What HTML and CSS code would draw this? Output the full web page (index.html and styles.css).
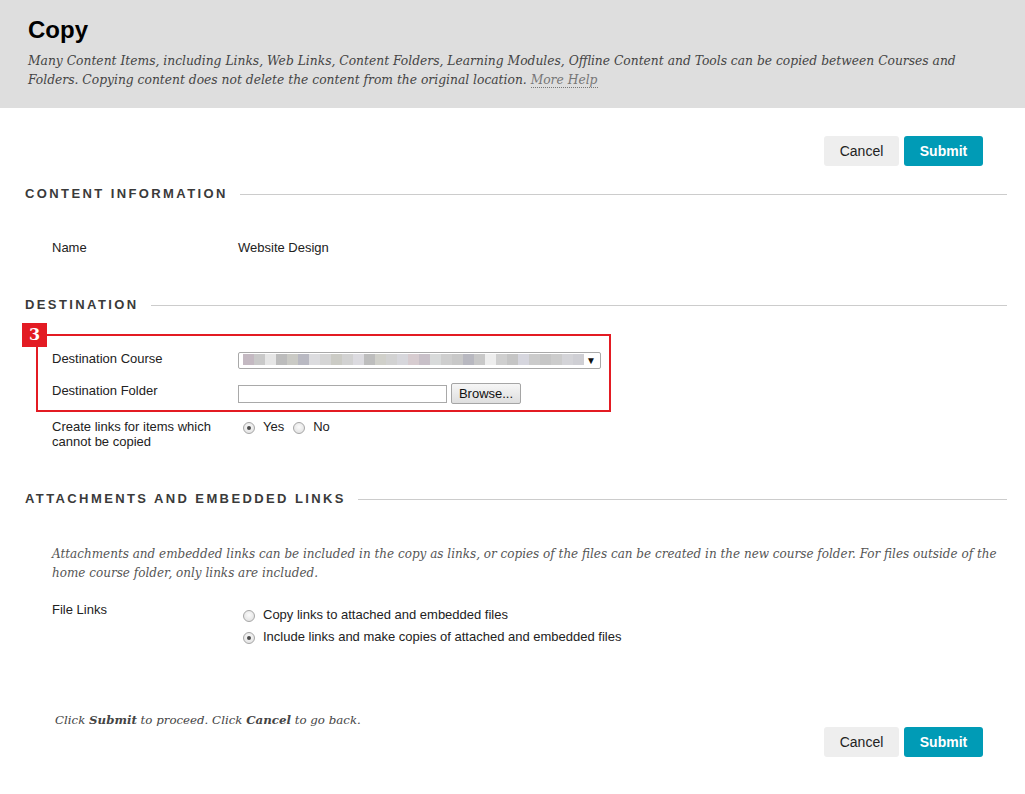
FILE: index.html
```html
<!DOCTYPE html>
<html lang="en">
<head>
<meta charset="utf-8">
<title>Copy</title>
<link rel="stylesheet" href="styles.css">
</head>
<body>
<header class="page-header">
  <h1 class="page-title">Copy</h1>
  <p class="page-desc">Many Content Items, including Links, Web Links, Content Folders, Learning Modules, Offline Content and Tools can be copied between Courses and Folders. Copying content does not delete the content from the original location. <span class="help-link">More Help</span></p>
</header>

<div class="btn-bar top-bar">
  <button class="btn btn-cancel">Cancel</button>
  <button class="btn btn-submit">Submit</button>
</div>

<section class="section sec-content">
  <h2 class="sec-title"><span>Content Information</span></h2>
  <div class="row row-name">
    <div class="label">Name</div>
    <div class="value">Website Design</div>
  </div>
</section>

<section class="section sec-dest">
  <h2 class="sec-title"><span>Destination</span></h2>
  <div class="callout">
    <span class="badge">3</span>
    <div class="row row-course">
      <div class="label">Destination Course</div>
      <div class="select">
        <div class="mosaic">
          <i style="background:#c4b9c2"></i><i style="background:#c9c9c9"></i><i style="background:#e6e6e6"></i><i style="background:#bcbcbc"></i><i style="background:#cacac5"></i><i style="background:#b9b9c2"></i><i style="background:#dcdcdf"></i><i style="background:#d5d5d5"></i><i style="background:#cbcbc5"></i><i style="background:#d2d2d2"></i><i style="background:#dcdbe0"></i><i style="background:#bdbdbd"></i><i style="background:#d0d0ca"></i><i style="background:#d2d2d2"></i><i style="background:#d7d7dc"></i><i style="background:#d7ccd0"></i><i style="background:#c8c0c8"></i><i style="background:#d8dada"></i><i style="background:#cecece"></i><i style="background:#c8c8c8"></i><i style="background:#b8b8c0"></i><i style="background:#c8c8c8"></i><i style="background:#eeeeee"></i><i style="background:#cfcfcf"></i><i style="background:#c5c5c5"></i><i style="background:#d6d6de"></i><i style="background:#cbcbcb"></i><i style="background:#c6c6c6"></i><i style="background:#cccccc"></i><i style="background:#d4d4d8"></i><i style="background:#cfcfd4"></i>
        </div>
        <span class="arrow">&#9660;</span>
      </div>
    </div>
    <div class="row row-folder">
      <div class="label">Destination Folder</div>
      <div class="value folder-ctrl">
        <span class="text-input"></span>
        <button class="browse">Browse...</button>
      </div>
    </div>
  </div>
  <div class="row row-links">
    <div class="label">Create links for items which cannot be copied</div>
    <div class="value radios-inline">
      <span class="radio checked"></span><span class="radio-label">Yes</span>
      <span class="radio"></span><span class="radio-label">No</span>
    </div>
  </div>
</section>

<section class="section sec-attach">
  <h2 class="sec-title"><span>Attachments and Embedded Links</span></h2>
  <p class="instructions">Attachments and embedded links can be included in the copy as links, or copies of the files can be created in the new course folder. For files outside of the home course folder, only links are included.</p>
  <div class="row row-files">
    <div class="label">File Links</div>
    <div class="value radios-stack">
      <div class="opt"><span class="radio"></span><span class="radio-label">Copy links to attached and embedded files</span></div>
      <div class="opt"><span class="radio checked"></span><span class="radio-label">Include links and make copies of attached and embedded files</span></div>
    </div>
  </div>
</section>

<footer class="footer">
  <p class="footer-note">Click <b>Submit</b> to proceed. Click <b>Cancel</b> to go back.</p>
  <div class="btn-bar bottom-bar">
    <button class="btn btn-cancel">Cancel</button>
    <button class="btn btn-submit">Submit</button>
  </div>
</footer>
</body>
</html>
```

FILE: styles.css
```css
* { box-sizing: border-box; }

body {
  margin: 0;
  font-family: "Liberation Sans", Arial, sans-serif;
  font-size: 13px;
  color: #222;
  background: #fff;
}

.page-header {
  background: #dedede;
  height: 108px;
  padding: 16px 28px 0 28px;
}

.page-title {
  margin: 0;
  font-size: 24px;
  line-height: 28px;
  font-weight: bold;
  color: #000;
}

.page-desc {
  margin: 8px 0 0 0;
  font-family: "DejaVu Serif", Georgia, serif;
  font-style: italic;
  font-size: 12.3px;
  line-height: 19px;
  color: #444;
  max-width: 960px;
}

.help-link {
  color: #777;
  border-bottom: 1px dotted #777;
}

.btn-bar {
  display: flex;
  justify-content: flex-end;
  gap: 5px;
  padding-right: 42px;
}

.top-bar { padding-top: 28px; }

.btn {
  height: 30px;
  border: none;
  border-radius: 3px;
  font-family: "Liberation Sans", Arial, sans-serif;
  font-size: 14px;
  padding: 0;
}

.btn-cancel {
  width: 75px;
  background: #eeeeee;
  color: #222;
}

.btn-submit {
  width: 79px;
  background: #009bb6;
  color: #fff;
  font-weight: bold;
}

.section { padding: 0 18px 0 25px; }

.sec-title {
  display: flex;
  align-items: center;
  gap: 12px;
  margin: 0;
  font-size: 13px;
  line-height: 16px;
  font-weight: bold;
  text-transform: uppercase;
  letter-spacing: 2.4px;
  color: #3a3a3a;
}

.sec-title::after {
  content: "";
  flex: 1;
  height: 1px;
  background: #cccccc;
}

.sec-content { margin-top: 20px; }
.sec-dest { margin-top: 41px; }
.sec-attach { margin-top: 42px; }

.row {
  display: grid;
  grid-template-columns: 186px 1fr;
  align-items: start;
  line-height: 16px;
}

.row-name {
  margin-top: 38px;
  padding-left: 27px;
}

.callout {
  position: relative;
  margin: 21px 0 0 11px;
  width: 575px;
  border: 2px solid #e31b23;
  padding: 15px 0 6px 14px;
}

.badge {
  position: absolute;
  left: -16px;
  top: -13px;
  width: 25px;
  height: 24px;
  background: #e31b23;
  color: #fff;
  font-family: "DejaVu Serif", Georgia, serif;
  font-weight: bold;
  font-size: 16px;
  line-height: 24px;
  text-align: center;
}

.select {
  position: relative;
  margin-top: 1px;
  width: 363px;
  height: 17px;
  border: 1px solid #a9a9a9;
  border-radius: 2px;
  background: #fff;
  padding: 1px 0 0 4px;
}

.mosaic {
  display: flex;
  height: 11px;
}

.mosaic i {
  display: block;
  width: 11px;
  height: 11px;
}

.arrow {
  position: absolute;
  right: 4px;
  top: 1px;
  font-size: 10px;
  line-height: 14px;
  color: #111;
}

.row-folder { margin-top: 14px; }

.folder-ctrl {
  display: flex;
  align-items: flex-start;
  gap: 4px;
}

.text-input {
  display: block;
  margin-top: 2px;
  width: 209px;
  height: 18px;
  border: 1px solid #a9a9a9;
  background: #fff;
}

.browse {
  margin-top: 0;
  height: 21px;
  width: 70px;
  padding: 0;
  border: 1px solid #a5a5a5;
  border-radius: 2px;
  background: linear-gradient(#f6f6f6, #dedede);
  font-family: "Liberation Sans", Arial, sans-serif;
  font-size: 13px;
  color: #111;
}

.row-links {
  margin-top: 7px;
  padding-left: 27px;
  line-height: 15px;
}

.row-links .label { padding-right: 20px; }

.radios-inline {
  display: flex;
  align-items: center;
  padding-top: 0;
}

.radio {
  display: inline-block;
  flex: none;
  width: 12px;
  height: 12px;
  margin-left: 5px;
  border-radius: 50%;
  border: 1px solid #a6a6a6;
  background: radial-gradient(circle at 50% 40%, #fbfbfb, #dcdcdc);
  position: relative;
}

.radio.checked::after {
  content: "";
  position: absolute;
  left: 3px;
  top: 3px;
  width: 4px;
  height: 4px;
  border-radius: 50%;
  background: #4a4a4a;
}

.radio-label { margin-left: 8px; }

.radios-inline .radio { margin-top: 2px; }
.radios-inline .radio-label + .radio { margin-left: 9px; }

.instructions {
  margin: 38px 0 0 27px;
  padding-right: 0;
  font-family: "DejaVu Serif", Georgia, serif;
  font-style: italic;
  font-size: 12px;
  line-height: 19px;
  color: #555;
}

.row-files {
  margin-top: 19px;
  padding-left: 27px;
}

.radios-stack {
  padding-top: 5px;
  display: flex;
  flex-direction: column;
  gap: 6px;
}

.opt {
  display: flex;
  align-items: center;
}

.opt .radio { margin-top: 2px; }

.footer {
  display: flex;
  justify-content: space-between;
  align-items: flex-start;
  margin-top: 65px;
}

.footer-note {
  margin: 0 0 0 55px;
  font-family: "DejaVu Serif", Georgia, serif;
  font-style: italic;
  font-size: 11.8px;
  line-height: 20px;
  color: #444;
}

.bottom-bar { margin-top: 17px; }
```
